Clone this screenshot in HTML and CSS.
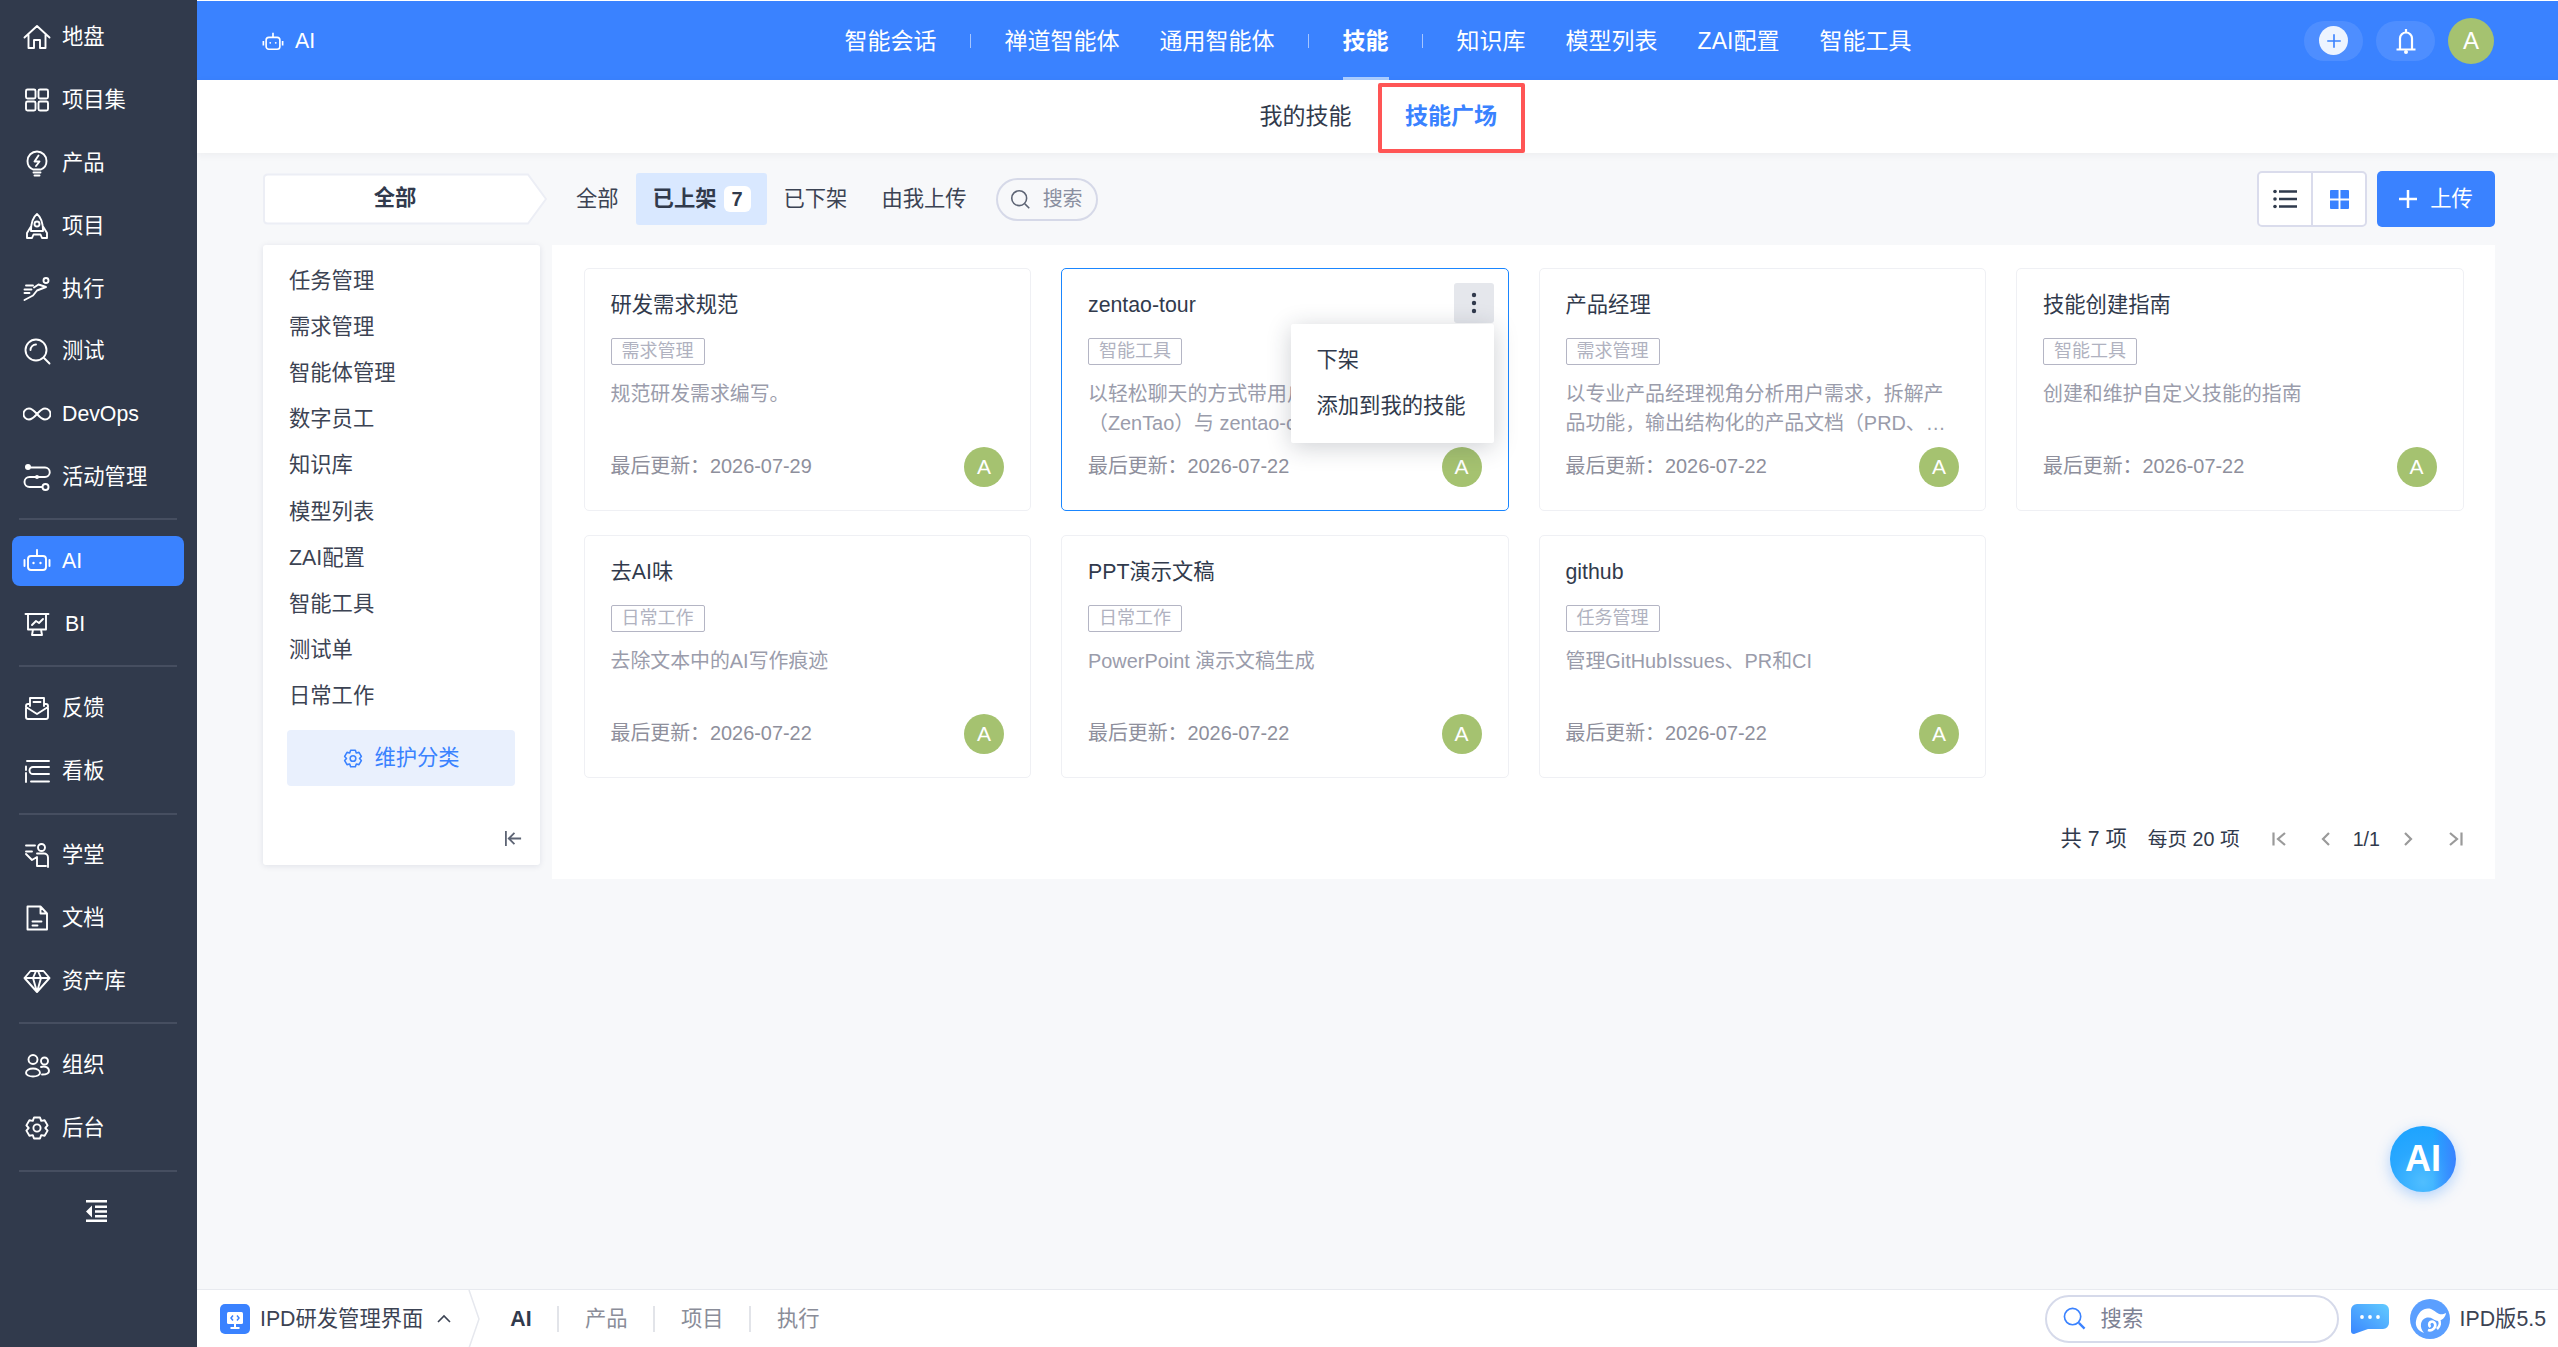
FILE: index.html
```html
<!DOCTYPE html>
<html lang="zh-CN">
<head>
<meta charset="utf-8">
<title>技能广场</title>
<link rel="stylesheet" href="styles.css">
</head>
<body>
<svg class="defs" aria-hidden="true"><symbol id="gear" viewBox="0 0 28 26"><path d="M11 2.500h6l1.200 3.400 3.400-.7 3 5.200-2.300 2.600 2.300 2.600-3 5.200-3.400-.7-1.200 3.400h-6l-1.200-3.400-3.400.7-3-5.200 2.300-2.600-2.300-2.600 3-5.200 3.400.7z"/><circle cx="14" cy="13" r="3.600"/></symbol></svg>
<div class="app">
  <aside class="sidebar">
    <div class="nav-group">
      <a class="nav-item"><svg class="nav-icon" viewBox="0 0 28 28"><path d="M1.500 14.500 14 3l12.500 11.500M5.500 12v13H11v-8h6v8h5.500V12"/></svg><span>地盘</span></a>
      <a class="nav-item"><svg class="nav-icon" viewBox="0 0 28 28"><rect x="3" y="3.500" width="9.500" height="9" rx="1.500"/><rect x="15.500" y="3.500" width="9.500" height="9" rx="1.500"/><rect x="3" y="15.500" width="9.500" height="9" rx="1.500"/><rect x="15.500" y="15.500" width="9.500" height="9" rx="1.500"/></svg><span>项目集</span></a>
      <a class="nav-item"><svg class="nav-icon" viewBox="0 0 28 28"><path d="M10 20.500C6.500 19 4.500 15.500 4.500 12a9.500 9.500 0 0 1 19 0c0 3.500-2 7-5.500 8.500zM15.500 6.500 11.500 12.500H16.500L13 17M10.500 23.500h7M11.500 26.500h5"/></svg><span>产品</span></a>
      <a class="nav-item"><svg class="nav-icon" viewBox="0 0 28 28"><path d="M14 2c-4.500 3.500-6 9-6 17h12c0-8-1.500-13.500-6-17zM8 14.500l-4 6.500v5h5l1.500-3.500h7L19 26h5v-5l-4-6.500"/><circle cx="14" cy="12" r="2.500"/></svg><span>项目</span></a>
      <a class="nav-item"><svg class="nav-icon" viewBox="0 0 28 28"><circle cx="23" cy="5.500" r="2.500"/><path d="M1.500 25l8.500-4.500 4-5 9-3.500-7.500-2.500-4.500 3M1.500 14.500h7M3 10.500h7M1.500 18h5"/></svg><span>执行</span></a>
      <a class="nav-item"><svg class="nav-icon" viewBox="0 0 28 28"><circle cx="13" cy="13" r="10.500"/><path d="M21 21l5.500 5.500M7.500 13A5.500 5.500 0 0 1 13 7.500"/></svg><span>测试</span></a>
      <a class="nav-item"><svg class="nav-icon" viewBox="0 0 28 28"><path d="M14 14c-3.500-4-5.500-5.500-8-5.500a5.500 5.500 0 0 0 0 11c2.500 0 4.500-1.500 8-5.500s5.500-5.500 8-5.500a5.500 5.500 0 0 1 0 11c-2.500 0-4.500-1.500-8-5.500z"/></svg><span>DevOps</span></a>
      <a class="nav-item"><svg class="nav-icon" viewBox="0 0 28 28"><circle class="solid" cx="5" cy="4" r="3"/><path d="M8 4.500h14a4.500 4.500 0 0 1 0 9.500H6.500a5 5 0 0 0 0 10h12.500"/><circle class="solid" cx="14" cy="14" r="2"/><circle cx="22.500" cy="24" r="3"/></svg><span>活动管理</span></a>
    </div>
    <div class="nav-divider"></div>
    <div class="nav-group">
      <a class="nav-item nav-item-active"><svg class="nav-icon" viewBox="0 0 28 28"><rect x="5" y="9" width="18" height="14" rx="3"/><path d="M14 9V4M1.500 13v6M26.500 13v6"/><circle class="solid" cx="14" cy="3" r="1"/><circle class="solid" cx="10.500" cy="16" r="1.200"/><circle class="solid" cx="17.500" cy="16" r="1.200"/></svg><span>AI</span></a>
      <a class="nav-item nav-item-bi"><svg class="nav-icon" viewBox="0 0 28 28"><path d="M2.500 4h23M5 4v15.500h18V4M9 15l4-4 3 2 4-4M10 19.500 9 25h10l-1-5.500"/></svg><span>BI</span></a>
    </div>
    <div class="nav-divider"></div>
    <div class="nav-group">
      <a class="nav-item"><svg class="nav-icon" viewBox="0 0 28 28"><path d="M7 12V4h14v8M10.500 8h7M7 10H5a2 2 0 0 0-2 2v11a2 2 0 0 0 2 2h18a2 2 0 0 0 2-2V12a2 2 0 0 0-2-2h-2M3 13l11 7 11-7"/></svg><span>反馈</span></a>
      <a class="nav-item"><svg class="nav-icon" viewBox="0 0 28 28"><path d="M4 4h22M3 9.500V13M3 16v9M26 10H10a2.500 2.500 0 0 0 0 7h16M26 24.500H8"/></svg><span>看板</span></a>
    </div>
    <div class="nav-divider"></div>
    <div class="nav-group">
      <a class="nav-item"><svg class="nav-icon" viewBox="0 0 28 28"><circle cx="18.500" cy="6.500" r="3.500"/><path d="M3 4.500h9M3 10.500h6M3 13l6 6 5-3v9h9M14 12.500h7a4 4 0 0 1 4 4V26"/></svg><span>学堂</span></a>
      <a class="nav-item"><svg class="nav-icon" viewBox="0 0 28 28"><path d="M4.500 2.500h13l6.500 7v16h-19.500zM17.500 2.500v7h6.500M9.500 17.500h9M9.500 21.500h5"/></svg><span>文档</span></a>
      <a class="nav-item"><svg class="nav-icon" viewBox="0 0 28 28"><path d="M7.500 4h13L26.500 11 14 25 1.500 11zM1.500 11h25M10 11l4 14 4-14M10 11l3-7M18 11l-3-7"/></svg><span>资产库</span></a>
    </div>
    <div class="nav-divider"></div>
    <div class="nav-group">
      <a class="nav-item"><svg class="nav-icon" viewBox="0 0 28 28"><circle cx="10" cy="8.500" r="4.500"/><circle cx="21.500" cy="10" r="3.500"/><path d="M3 22a7 4.500 0 0 1 14 0 7 3.500 0 0 1-14 0zM18 16c4-1.500 8 .5 8 4 0 2.500-3 3.500-7 3.500"/></svg><span>组织</span></a>
      <a class="nav-item"><svg class="nav-icon" viewBox="0 0 28 26"><use href="#gear"/></svg><span>后台</span></a>
    </div>
    <div class="nav-divider"></div>
    <div class="nav-collapse"><svg class="collapse-icon" viewBox="0 0 21 22"><path d="M0 0h21v2.500H0zM9 5.500h12V8H9zM9 10.200h12v2.500H9zM9 15h12v2.500H9zM0 19.500h21V22H0zM6 5.500v12L0 11.500z"/></svg></div>
  </aside>

  <div class="main">
    <header class="topbar">
      <div class="topbar-left">
        <svg class="topbar-icon" viewBox="0 0 24 24"><rect x="4.500" y="8" width="15" height="13" rx="3"/><path d="M12 8V3M1.500 12v5M22.500 12v5"/><circle class="solid" cx="9" cy="14" r="1"/><circle class="solid" cx="15" cy="14" r="1"/></svg>
        <span>AI</span>
      </div>
      <nav class="topnav">
        <a class="topnav-item">智能会话</a><i class="topnav-sep"></i>
        <a class="topnav-item">禅道智能体</a>
        <a class="topnav-item">通用智能体</a><i class="topnav-sep"></i>
        <a class="topnav-item topnav-item-active">技能</a><i class="topnav-sep"></i>
        <a class="topnav-item">知识库</a>
        <a class="topnav-item">模型列表</a>
        <a class="topnav-item">ZAI配置</a>
        <a class="topnav-item">智能工具</a>
      </nav>
      <div class="topbar-right">
        <button class="pill-btn"><span class="plus-disc"><svg viewBox="0 0 20 20"><path d="M10 2.500v15M2.500 10h15"/></svg></span></button>
        <button class="pill-btn"><svg class="bell" viewBox="0 0 22 26"><path d="M5 21V10.500a6 6 0 0 1 12 0V21M1.500 21.500h19M11 1v3.500"/><circle class="solid" cx="11" cy="24" r="2"/></svg></button>
        <span class="avatar avatar-lg">A</span>
      </div>
    </header>

    <div class="subnav">
      <a class="subnav-tab">我的技能</a>
      <a class="subnav-tab subnav-tab-active">技能广场<span class="highlight-box"></span></a>
    </div>

    <div class="content">
      <div class="toolbar">
        <div class="crumb">
          <svg class="crumb-shape" viewBox="0 0 284 52"><path d="M5 1.500H265L283 26 265 50.500H5Q1 50.500 1 47V5Q1 1.500 5 1.500Z"/></svg>
          <span class="crumb-text">全部</span>
        </div>
        <a class="filter-tab">全部</a>
        <a class="filter-tab filter-tab-active">已上架<span class="filter-badge">7</span></a>
        <a class="filter-tab">已下架</a>
        <a class="filter-tab">由我上传</a>
        <div class="search-mini">
          <svg viewBox="0 0 24 24"><circle cx="10.500" cy="10.500" r="8.500"/><path d="m17 17 5 5"/></svg>
          <span>搜索</span>
        </div>
        <div class="toolbar-right">
          <div class="view-switch">
            <button class="view-btn"><svg class="list-icon" viewBox="0 0 24 20"><circle class="dark" cx="2" cy="2.500" r="1.800"/><circle class="dark" cx="2" cy="10" r="1.800"/><circle class="dark" cx="2" cy="17.500" r="1.800"/><path d="M6 1.300h18v2.400H6zM6 8.800h18v2.400H6zM6 16.300h18v2.400H6z" class="dark"/></svg></button>
            <button class="view-btn"><svg class="grid-icon" viewBox="0 0 20 20"><path class="blue" d="M1 0h8v9H0V1a1 1 0 0 1 1-1zM11 0h8a1 1 0 0 1 1 1v8h-9zM0 11h9v9H1a1 1 0 0 1-1-1zM11 11h9v8a1 1 0 0 1-1 1h-8z"/></svg></button>
          </div>
          <button class="upload-btn"><svg viewBox="0 0 18 18"><path d="M9 0v18M0 9h18"/></svg><span>上传</span></button>
        </div>
      </div>

      <div class="workspace">
        <aside class="category-panel">
          <ul class="category-list">
            <li>任务管理</li><li>需求管理</li><li>智能体管理</li><li>数字员工</li><li>知识库</li><li>模型列表</li><li>ZAI配置</li><li>智能工具</li><li>测试单</li><li>日常工作</li>
          </ul>
          <button class="maintain-btn"><svg viewBox="0 0 28 26"><use href="#gear"/></svg><span>维护分类</span></button>
          <svg class="panel-collapse" viewBox="0 0 20 20"><path d="M2 2v16M18 10H6M11 4l-6 6 6 6"/></svg>
        </aside>

        <section class="skills-panel">
          <div class="skills-grid">
            <article class="card">
              <h3 class="card-title">研发需求规范</h3>
              <span class="card-tag">需求管理</span>
              <p class="card-desc">规范研发需求编写。</p>
              <div class="card-foot"><span class="card-date">最后更新：2026-07-29</span><span class="avatar">A</span></div>
            </article>
            <article class="card card-hover">
              <h3 class="card-title">zentao-tour</h3>
              <span class="card-tag">智能工具</span>
              <p class="card-desc">以轻松聊天的方式带用户了解禅道<br>（ZenTao）与 zentao-cli 的使用方法</p>
              <div class="card-foot"><span class="card-date">最后更新：2026-07-22</span><span class="avatar">A</span></div>
              <button class="more-btn"><svg viewBox="0 0 6 22"><circle cx="3" cy="3" r="2.200"/><circle cx="3" cy="11" r="2.200"/><circle cx="3" cy="19" r="2.200"/></svg></button>
              <div class="popup-menu"><a>下架</a><a>添加到我的技能</a></div>
            </article>
            <article class="card">
              <h3 class="card-title">产品经理</h3>
              <span class="card-tag">需求管理</span>
              <p class="card-desc">以专业产品经理视角分析用户需求，拆解产<br>品功能，输出结构化的产品文档（PRD、…</p>
              <div class="card-foot"><span class="card-date">最后更新：2026-07-22</span><span class="avatar">A</span></div>
            </article>
            <article class="card">
              <h3 class="card-title">技能创建指南</h3>
              <span class="card-tag">智能工具</span>
              <p class="card-desc">创建和维护自定义技能的指南</p>
              <div class="card-foot"><span class="card-date">最后更新：2026-07-22</span><span class="avatar">A</span></div>
            </article>
            <article class="card">
              <h3 class="card-title">去AI味</h3>
              <span class="card-tag">日常工作</span>
              <p class="card-desc">去除文本中的AI写作痕迹</p>
              <div class="card-foot"><span class="card-date">最后更新：2026-07-22</span><span class="avatar">A</span></div>
            </article>
            <article class="card">
              <h3 class="card-title">PPT演示文稿</h3>
              <span class="card-tag">日常工作</span>
              <p class="card-desc">PowerPoint 演示文稿生成</p>
              <div class="card-foot"><span class="card-date">最后更新：2026-07-22</span><span class="avatar">A</span></div>
            </article>
            <article class="card">
              <h3 class="card-title">github</h3>
              <span class="card-tag">任务管理</span>
              <p class="card-desc">管理GitHubIssues、PR和CI</p>
              <div class="card-foot"><span class="card-date">最后更新：2026-07-22</span><span class="avatar">A</span></div>
            </article>
          </div>
          <div class="pager">
            <span class="pager-total">共 7 项</span>
            <span class="pager-size">每页 20 项</span>
            <svg class="pager-icon pager-first" viewBox="0 0 14 16"><path d="M1.500 1.500v13M13 2 6 8l7 6"/></svg>
            <svg class="pager-icon pager-prev" viewBox="0 0 9 16"><path d="M8 2 2 8l6 6"/></svg>
            <span class="pager-page">1/1</span>
            <svg class="pager-icon pager-next" viewBox="0 0 9 16"><path d="m1 2 6 6-6 6"/></svg>
            <svg class="pager-icon pager-last" viewBox="0 0 14 16"><path d="m1 2 7 6-7 6M12.500 1.500v13"/></svg>
          </div>
        </section>
      </div>
    </div>

    <footer class="bottombar">
      <span class="bottom-logo"><svg viewBox="0 0 30 30"><rect x="7" y="8" width="16" height="12" rx="1.500" fill="#fff"/><path d="M15 20v3M10.500 24h9" stroke="#fff" stroke-width="2"/><path d="M13 11.500 11 14l2 2.500M17 11.500 19 14l-2 2.500" stroke="#3a82ff" stroke-width="1.500" fill="none"/></svg></span>
      <span class="bottom-project">IPD研发管理界面</span>
      <svg class="bottom-chevron" viewBox="0 0 14 9"><path d="m1 8 6-6 6 6"/></svg>
      <svg class="bottom-arrow" viewBox="0 0 12 58"><path d="M1 0 11 29 1 58"/></svg>
      <a class="bottom-tab bottom-tab-active">AI</a>
      <a class="bottom-tab">产品</a>
      <a class="bottom-tab">项目</a>
      <a class="bottom-tab">执行</a>
      <div class="bottom-right">
        <div class="search-big">
          <svg viewBox="0 0 24 24"><circle cx="10" cy="10" r="8.500" class="ring"/><path d="m16.500 16.500 6 6" class="ring thick"/></svg>
          <span>搜索</span>
        </div>
        <svg class="chat-icon" viewBox="0 0 38 30"><defs><linearGradient id="chatg" x1="0" y1="1" x2="1" y2="0"><stop offset="0" stop-color="#3a86ff"/><stop offset="1" stop-color="#62cbff"/></linearGradient></defs><path fill="url(#chatg)" d="M6 0h26a6 6 0 0 1 6 6v13a6 6 0 0 1-6 6H17L3 30Q0 30 0 27V6a6 6 0 0 1 6-6z"/><circle cx="11" cy="13" r="1.900" fill="#fff"/><circle cx="19" cy="13" r="1.900" fill="#fff"/><circle cx="27" cy="13" r="1.900" fill="#fff"/></svg>
        <svg class="brand-logo" viewBox="0 0 40 40"><circle cx="20" cy="20" r="20" fill="#5b9fff"/><path fill="#fff" d="M6 22C8 12 15 8 21 10c5 2 8 8 15 4-1 7-8 10-13 6-5-3-11-1-12 5-.5 3 .5 6 3 9-6-2-9-7-8-12z"/><path fill="none" stroke="#fff" stroke-width="2.600" d="M20.500 28a3 3 0 1 1 4.500-3.500c1.500 4-3 8-7 6.500M27 30c3-3 4-7 1-10"/></svg>
        <span class="brand-text">IPD版5.5</span>
      </div>
    </footer>
  </div>
</div>
<button class="ai-fab">AI</button>
</body>
</html>
```

FILE: styles.css
```css
* { box-sizing: border-box; }
html, body { margin: 0; padding: 0; height: 100%; }
body {
  width: 2558px;
  height: 1347px;
  overflow: hidden;
  font-family: "Liberation Sans", "Noto Sans CJK SC", sans-serif;
  font-size: 21.3px;
  line-height: 28px;
  color: #3c4353;
  background: #f7f8fa;
  position: relative;
}
a { color: inherit; text-decoration: none; }
button { font: inherit; border: 0; padding: 0; background: none; color: inherit; }
ul { list-style: none; margin: 0; padding: 0; }
h3, p { margin: 0; font-weight: 400; }
.defs { display: none; }
.app { display: flex; height: 1347px; }

/* sidebar */
.sidebar { width: 197px; flex: none; background: #313a4c; color: #fff; padding-top: 6px; }
.nav-group { display: flex; flex-direction: column; }
.nav-item { position: relative; display: flex; align-items: center; height: 62.800px; padding-left: 23px; gap: 11px; z-index: 0; }
.nav-item-active::before { content: ""; position: absolute; left: 12px; top: 6.400px; width: 172px; height: 50px; border-radius: 8px; background: #3a82ff; z-index: -1; }
.nav-item-bi { gap: 14px; }
.nav-icon { width: 28px; height: 28px; flex: none; fill: none; stroke: #fff; stroke-width: 1.900; stroke-linejoin: round; stroke-linecap: round; }
.solid { fill: #fff; stroke: none; }
.nav-divider { height: 2px; margin: 10px 20px 9.500px 19px; background: #464e60; }
.nav-collapse { display: flex; justify-content: center; padding: 19px 4px 0 0; }
.collapse-icon { width: 21px; height: 22px; fill: #fff; }

/* main */
.main { flex: 1; min-width: 0; display: flex; flex-direction: column; }
.topbar { display: grid; grid-template-columns: 1fr auto 1fr; align-items: center; height: 80px; border-top: 1px solid #fff; padding: 0 64px 0 65px; background: #3a82ff; color: #fff; }
.topbar-left { display: flex; align-items: center; gap: 11px; }
.topbar-icon { width: 22px; height: 24px; fill: none; stroke: #fff; stroke-width: 1.800; }
.topnav { display: flex; align-items: center; height: 79px; font-size: 23px; }
.topnav-item { position: relative; display: flex; align-items: center; height: 100%; padding: 0 20px; }
.topnav-item-active { font-weight: 700; }
.topnav-item-active::after { content: ""; position: absolute; left: 20px; right: 20px; bottom: 0; height: 3px; background: #abcdff; }
.topnav-sep { width: 1px; height: 14px; margin: 0 13.500px; background: rgba(255, 255, 255, .55); }
.topbar-right { display: flex; justify-content: flex-end; align-items: center; gap: 13px; }
.pill-btn { width: 59px; height: 40px; border-radius: 20px; background: rgba(255, 255, 255, .1); display: flex; align-items: center; justify-content: center; }
.plus-disc { width: 29px; height: 29px; border-radius: 50%; background: #edf4ff; display: flex; align-items: center; justify-content: center; }
.plus-disc svg { width: 18px; height: 18px; fill: none; stroke: #3a82ff; stroke-width: 1.800; }
.bell { width: 22px; height: 26px; fill: none; stroke: #fff; stroke-width: 2.200; }
.avatar { width: 40px; height: 40px; flex: none; border-radius: 50%; background: #a5c270; color: #fff; font-size: 21px; line-height: 40px; text-align: center; }
.avatar-lg { width: 46px; height: 46px; line-height: 46px; font-size: 24px; }

.subnav { position: relative; z-index: 1; display: flex; justify-content: center; flex: none; height: 73px; background: #fff; box-shadow: 0 2px 8px rgba(30, 40, 60, .05); font-size: 23px; }
.subnav-tab { position: relative; display: flex; align-items: center; width: 147px; justify-content: center; padding: 0 0 2px 3px; color: #313a4c; }
.subnav-tab-active { color: #3a82ff; font-weight: 700; padding-left: 0; }
.highlight-box { position: absolute; left: 0; right: 0; top: 3px; bottom: 0; border: 4px solid #f55; border-radius: 2px; }

.content { flex: 1; min-height: 0; padding: 18px 63px 0 66px; }
.toolbar { display: flex; align-items: center; height: 56px; margin-bottom: 18px; }
.crumb { position: relative; width: 282px; height: 52px; margin-right: 14px; flex: none; }
.crumb-shape { position: absolute; left: 0; top: 0; width: 284px; height: 52px; fill: #fff; stroke: #eceef5; stroke-width: 2; }
.crumb-text { position: relative; display: block; width: 264px; line-height: 50px; text-align: center; font-weight: 700; color: #313a4c; }
.filter-tab { display: flex; align-items: center; height: 52px; padding: 0 17px; border-radius: 3px; }
.filter-tab-active { background: #d9e8ff; font-weight: 700; color: #313a4c; padding-right: 16px; }
.filter-badge { width: 27px; height: 26px; margin-left: 7px; border-radius: 6px; background: #fff; text-align: center; line-height: 26px; font-size: 20px; }
.search-mini { display: flex; align-items: center; gap: 12px; width: 102px; height: 43px; margin-left: 12px; padding-left: 12px; border: 2px solid #d6d9e8; border-radius: 22px; color: #8a8fa0; font-size: 20px; }
.search-mini svg { width: 21px; height: 21px; flex: none; fill: none; stroke: #5d6474; stroke-width: 1.800; }
.toolbar-right { display: flex; gap: 10px; margin-left: auto; }
.view-switch { display: flex; width: 110px; height: 56px; border: 2px solid #dadcec; border-radius: 5px; background: #fff; }
.view-btn { flex: 1; display: flex; align-items: center; justify-content: center; }
.view-btn + .view-btn { border-left: 2px solid #dadcec; }
.list-icon { width: 24px; height: 20px; }
.grid-icon { width: 19px; height: 19px; }
.dark { fill: #2f3a4c; }
.blue { fill: #3a82ff; }
.upload-btn { display: flex; align-items: center; justify-content: center; gap: 13px; width: 118px; height: 56px; border-radius: 5px; background: #3a82ff; color: #fff; }
.upload-btn svg { width: 18px; height: 18px; fill: none; stroke: #fff; stroke-width: 2.500; }

.workspace { display: flex; align-items: flex-start; gap: 12px; }
.category-panel { display: flex; flex-direction: column; width: 277px; height: 620px; flex: none; padding: 12.600px 25px 17px 24px; background: #fff; border-radius: 3px; box-shadow: 0 1px 6px rgba(20, 30, 80, .1); }
.category-list li { height: 46.200px; padding-left: 2px; line-height: 46px; }
.maintain-btn { display: flex; align-items: center; justify-content: center; gap: 10px; height: 56px; margin-top: 11px; border-radius: 4px; background: #e9f0fd; color: #3a82ff; }
.maintain-btn svg { width: 22px; height: 21px; fill: none; stroke: #3a82ff; stroke-width: 2; stroke-linejoin: round; }
.panel-collapse { align-self: flex-end; width: 19px; height: 19px; margin: auto -8px 0 0; fill: none; stroke: #5d6474; stroke-width: 1.900; }

.skills-panel { flex: 1; min-width: 0; height: 634px; display: flex; flex-direction: column; padding: 23px 32px 0 31.500px; background: #fff; }
.skills-grid { display: grid; grid-template-columns: repeat(4, 447.500px); grid-auto-rows: 243px; gap: 23.500px 30px; height: 510px; }
.card { position: relative; display: flex; flex-direction: column; align-items: flex-start; padding: 22px 26px 23px; border: 1px solid #eff0f4; border-radius: 5px; background: #fff; }
.card-hover { border: 1.500px solid #1a86ff; }
.card-title { font-size: 21.300px; line-height: 28px; color: #313a4c; }
.card-tag { margin-top: 19px; height: 27px; width: 94px; border: 1px solid #b4b5c4; border-radius: 2px; font-size: 18px; line-height: 25px; text-align: center; color: #b0b2c0; }
.card-desc { margin-top: 15px; font-size: 19.900px; line-height: 28.700px; color: #9a9cab; height: 58px; overflow: hidden; white-space: nowrap; max-width: 100%; }
.card-foot { margin-top: auto; align-self: stretch; display: flex; align-items: center; justify-content: space-between; }
.card-date { font-size: 19.900px; color: #8e8f9c; padding-bottom: 2px; }
.more-btn { position: absolute; top: 14px; right: 14px; width: 40px; height: 40px; border-radius: 3px; background: #e5e7ec; display: flex; align-items: center; justify-content: center; }
.more-btn svg { width: 6px; height: 22px; fill: #313a4c; }
.popup-menu { position: absolute; z-index: 2; top: 55px; right: 14px; width: 203px; height: 119px; display: flex; flex-direction: column; padding: 13px 0 0 26px; background: #fff; border-radius: 2px; box-shadow: 0 4px 24px rgba(30, 40, 60, .22); color: #313a4c; }
.popup-menu a { height: 46px; line-height: 46px; }

.pager { display: flex; align-items: center; justify-content: flex-end; height: 80px; margin-top: 21px; font-size: 19.700px; color: #313a4c; }
.pager-total { font-size: 21.300px; }
.pager-size { margin-left: 21px; }
.pager-icon { height: 16px; fill: none; stroke: #9a9a9a; stroke-width: 2.200; flex: none; }
.pager-first, .pager-last { width: 14px; }
.pager-prev, .pager-next { width: 9px; }
.pager-first { margin-left: 32px; }
.pager-prev { margin-left: 35px; }
.pager-page { margin-left: 23px; }
.pager-next { margin-left: 24px; }
.pager-last { margin-left: 36px; }

.bottombar { display: flex; align-items: center; flex: none; height: 58px; padding-left: 23px; background: #fff; border-top: 1px solid #e8eaef; }
.bottom-logo { width: 30px; height: 30px; flex: none; border-radius: 5px; background: #3a82ff; margin-right: 10px; }
.bottom-logo svg { display: block; width: 30px; height: 30px; }
.bottom-chevron { width: 14px; height: 9px; margin-left: 14px; fill: none; stroke: #3c4353; stroke-width: 1.600; }
.bottom-arrow { width: 12px; height: 58px; margin: 0 4px 0 17px; fill: none; stroke: #e6e8ee; stroke-width: 1.500; }
.bottom-tab { display: flex; align-items: center; height: 26px; padding: 0 25.400px 0 26px; color: #8a8d99; border-right: 2px solid #e2e4e9; }
.bottom-tab:last-of-type { border-right: 0; }
.bottom-tab-active { color: #313a4c; font-weight: 700; }
.bottom-right { display: flex; align-items: center; margin-left: auto; padding-right: 12px; }
.search-big { display: flex; align-items: center; gap: 15px; width: 294px; height: 48px; padding-left: 16px; border: 2px solid #d6daea; border-radius: 24px; color: #7d8294; }
.search-big svg { width: 23px; height: 23px; flex: none; }
.ring { fill: none; stroke: #3a82ff; stroke-width: 1.700; }
.thick { stroke-width: 2.400; }
.chat-icon { width: 38px; height: 30px; margin-left: 12px; flex: none; }
.brand-logo { width: 40px; height: 40px; margin-left: 21px; flex: none; }
.brand-text { margin-left: 10px; }

.ai-fab { position: absolute; left: 2390px; top: 1126px; width: 66px; height: 66px; border-radius: 50%; background-color: #1da2ff; background-image: linear-gradient(90deg, rgba(58, 130, 255, 0) 65%, #3a82ff 100%), radial-gradient(circle at 50% 85%, #50beff 0, #2aa8ff 50%, #18a2ff 100%); box-shadow: 0 4px 14px rgba(50, 140, 255, .35); color: #fff; font-family: "Liberation Sans", sans-serif; font-weight: 700; font-size: 36px; line-height: 66px; text-align: center; }
```
